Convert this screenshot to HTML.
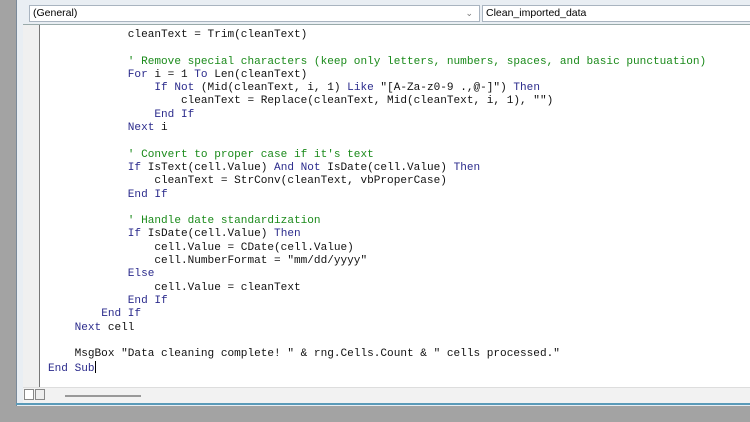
<!DOCTYPE html>
<html><head><meta charset="utf-8"><style>
*{margin:0;padding:0;box-sizing:border-box}
body{width:750px;height:422px;background:#a3a3a3;position:relative;overflow:hidden;font-family:"Liberation Mono",monospace}
.win{position:absolute;left:16px;top:0;width:734px;height:406px;background:#e9eef3;border-left:1px solid #7a8a9a}
.combo{position:absolute;top:5px;height:17px;background:#fff;border:1px solid #a9b4c0;font-family:"Liberation Sans",sans-serif;font-size:10.5px;line-height:15px;padding-left:3px;color:#000}
.chev{position:absolute;right:6px;top:0;color:#777;font-size:9px}
.code{position:absolute;left:23px;top:24px;width:727px;height:363px;background:#fff;border-top:1px solid #9aa}
.margin{position:absolute;left:0;top:0;width:17px;height:100%;background:#f0f0f0;border-right:1px solid #777}
pre{position:absolute;left:25px;top:4px;font-family:"Liberation Mono",monospace;font-size:11.08px;line-height:13.3px;color:#111}
.k{color:#2b2b8c}.c{color:#1a8a1a}
.bar{position:absolute;left:23px;top:387px;width:727px;height:16px;background:#f2f2f2;border-top:1px solid #ddd}
.bar .b1{position:absolute;left:1px;top:1px;width:10px;height:11px;border:1px solid #888;background:#fff}
.bar .b2{position:absolute;left:12px;top:1px;width:10px;height:11px;border:1px solid #888;background:#eee}
.bar .s{position:absolute;left:42px;top:7px;width:76px;height:2px;background:#999}
.bot{position:absolute;left:16px;top:403px;width:734px;height:2px;background:#5a9ab8}
.cur{display:inline-block;width:1px;height:12px;background:#000;vertical-align:-2px}
</style></head><body>
<div class="win">
<div class="combo" style="left:12px;width:451px">(General)<span class="chev">&#8964;</span></div>
<div class="combo" style="left:465px;width:270px">Clean_imported_data</div>
</div>
<div class="code"><div class="margin"></div>
<pre>            cleanText = Trim(cleanText)

            <span class="c">' Remove special characters (keep only letters, numbers, spaces, and basic punctuation)</span>
            <span class="k">For</span> i = 1 <span class="k">To</span> Len(cleanText)
                <span class="k">If Not</span> (Mid(cleanText, i, 1) <span class="k">Like</span> "[A-Za-z0-9 .,@-]") <span class="k">Then</span>
                    cleanText = Replace(cleanText, Mid(cleanText, i, 1), "")
                <span class="k">End If</span>
            <span class="k">Next</span> i

            <span class="c">' Convert to proper case if it's text</span>
            <span class="k">If</span> IsText(cell.Value) <span class="k">And Not</span> IsDate(cell.Value) <span class="k">Then</span>
                cleanText = StrConv(cleanText, vbProperCase)
            <span class="k">End If</span>

            <span class="c">' Handle date standardization</span>
            <span class="k">If</span> IsDate(cell.Value) <span class="k">Then</span>
                cell.Value = CDate(cell.Value)
                cell.NumberFormat = "mm/dd/yyyy"
            <span class="k">Else</span>
                cell.Value = cleanText
            <span class="k">End If</span>
        <span class="k">End If</span>
    <span class="k">Next</span> cell

    MsgBox "Data cleaning complete! " &amp; rng.Cells.Count &amp; " cells processed."
<span class="k">End Sub</span><span class="cur"></span></pre>
</div>
<div class="bar"><div class="b1"></div><div class="b2"></div><div class="s"></div></div>
<div class="bot"></div>
</body></html>
